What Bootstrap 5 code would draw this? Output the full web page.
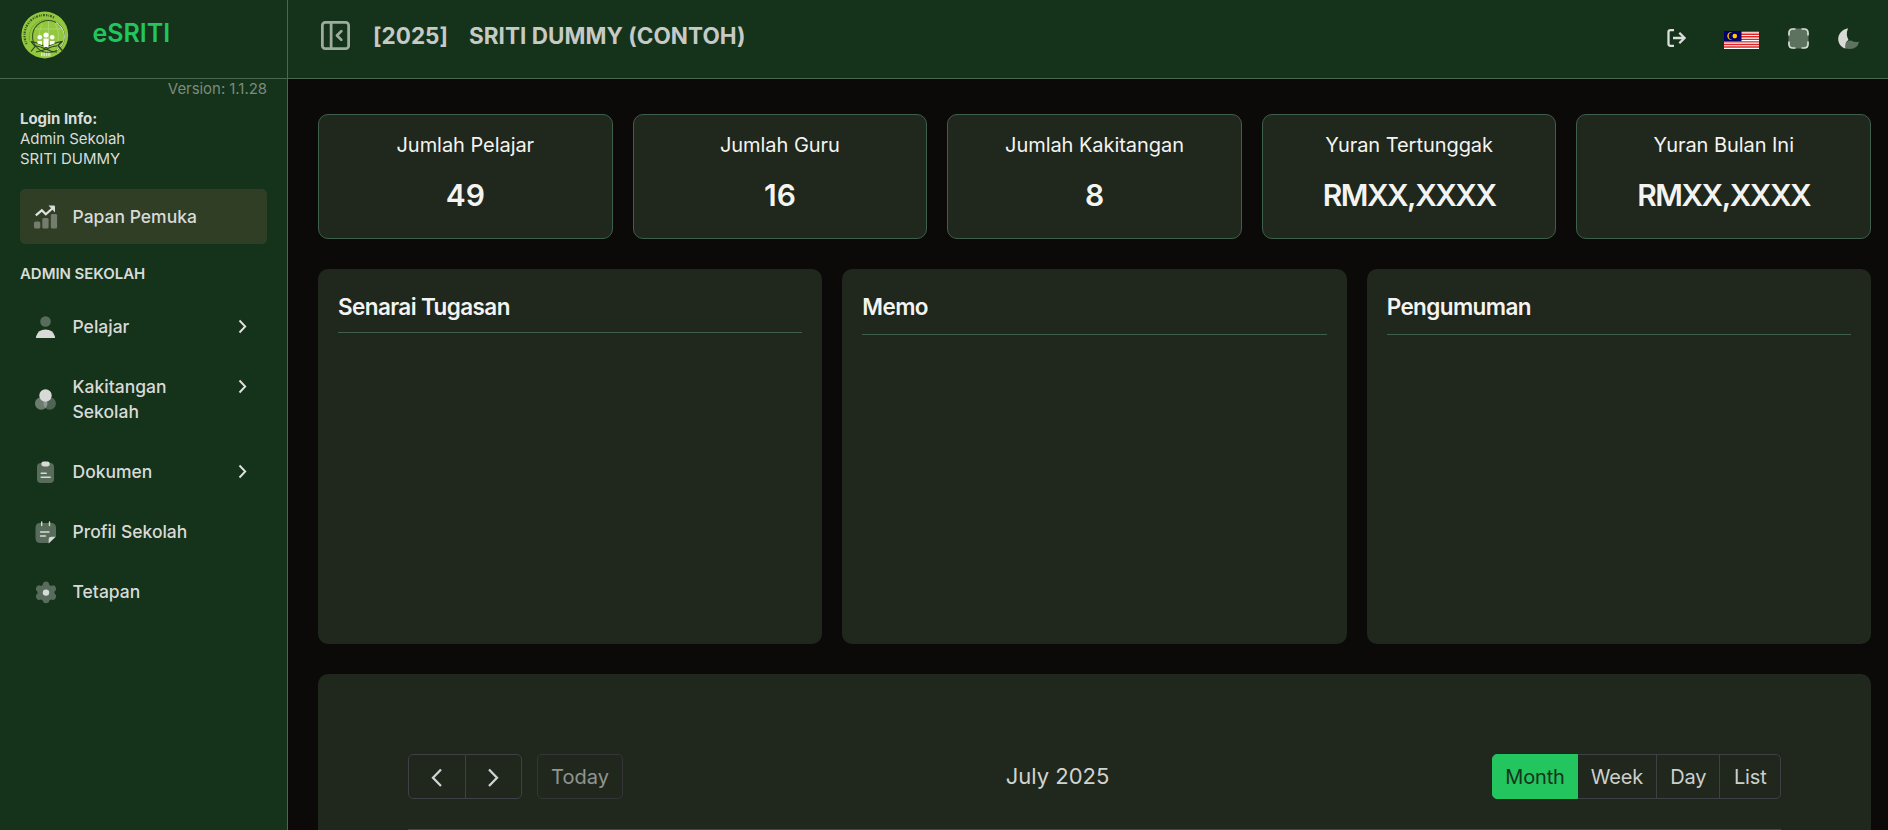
<!DOCTYPE html>
<html lang="ms" data-bs-theme="dark">
<head>
<meta charset="utf-8">
<meta name="viewport" content="width=device-width, initial-scale=1">
<title>eSRITI</title>
<link href="https://cdn.jsdelivr.net/npm/bootstrap@5.3.0/dist/css/bootstrap.min.css" rel="stylesheet">
<style>
:root{--green:#15321a;--line:#4a6550;--panel:#20271d;--edge:#3d5f4b;--fg:#d8dcd8}
body{font-family:Inter,"Liberation Sans",sans-serif;background:#0c0a09;color:var(--fg);height:100vh;overflow:hidden}
svg{display:block;flex:none}
.sidebar{width:288px;background:var(--green);border-right:1px solid var(--line);flex:none}
.brand-bar,.topbar{height:79px;border-bottom:1px solid var(--line);background:var(--green);flex:none}
.brand-bar{padding:11px 0 0 21px;gap:23.5px}
.brand-name{font-size:25px;line-height:30px;font-weight:600;color:#22c55e;margin-top:7px}
.version{font-size:15px;line-height:20px;padding-right:20px;color:#7a8b7c;letter-spacing:-.05px}
.login{font-size:15px;line-height:20px;padding:10px 20px 0;color:#dadcda;letter-spacing:-.03px}
.menu{margin:20px 20px 0;font-size:17.5px;font-weight:500;line-height:25px}
.menu-item{padding:15px 19px 15px 10px;border-radius:5px;min-height:55px;color:#d8dad8;text-decoration:none;display:flex;align-items:center;margin-bottom:5px}
.menu-item svg:first-child{margin:-2.5px 0}
.menu-item span{margin-left:12.5px;flex:1}
.menu-item .chev{align-self:flex-start;margin-top:2px}
.menu-item.on{background:#313e26}
.menu-head{font-size:15px;line-height:20px;font-weight:600;margin:20px 0 15px;letter-spacing:-.05px}
.topbar{padding:0 24px 0 30px}
.topbar-panel{margin-top:18px}
.title{font-size:22.5px;line-height:30px;font-weight:700;color:#c6cac6;margin:21px 0 0 20px;gap:21px;letter-spacing:.03px}
.tools{margin-top:23px}
.content{padding:35px 17px 0 30px}
.stats{gap:20px}
.stat{flex:1 1 0;background:var(--panel);border:1px solid var(--edge);border-radius:10px;height:125px;color:#f3f4f1;text-align:center;padding-top:15px}
.stat-label{font-size:20px;line-height:30px;letter-spacing:-.05px}
.stat-value{font-size:30px;line-height:40px;font-weight:600;margin-top:15px;letter-spacing:-1.5px}
.stat-value.count{letter-spacing:0}
.boxes{gap:20px;margin-top:30px}
.box{flex:1 1 0;background:var(--panel);border-radius:10px;height:375px;padding:20px}
.box h2{font-size:22.5px;line-height:35px;font-weight:600;letter-spacing:-.6px;color:#f3f4f1;margin:0;padding-bottom:10px;border-bottom:1px solid var(--edge)}
.box:first-child h2{padding-bottom:8px}
.calendar{background:var(--panel);border-radius:10px 10px 0 0;margin-top:30px;height:156px;padding:80px 90px 0}
.cal-bar{height:45px}
.cal-btn{height:45px;border:1px solid #3f3f46;font-size:20px;color:#ccd0cd;border-radius:5px;padding:0 12.5px;line-height:30px;display:flex;align-items:center;justify-content:center;background:none}
.step-btn{width:57.5px}
.today-btn{width:86px;opacity:.65}
.cal-group{display:flex}
.cal-group .cal-btn{border-radius:0}
.cal-group .cal-btn:first-child{border-radius:5px 0 0 5px}
.cal-group .cal-btn:last-child{border-radius:0 5px 5px 0}
.cal-group .cal-btn+.cal-btn{margin-left:-1px}
.views .cal-btn{letter-spacing:-.15px;width:64.5px;padding:0}
.views .cal-btn:nth-child(1){width:86px}
.views .cal-btn:nth-child(2){width:80px}
.views .cal-btn:nth-child(4){width:61.5px}
.cal-btn.on{background:#22c55e;border-color:#22c55e;color:#16321b;position:relative}
.cal-title{font-size:22px;color:#d0d4d0}
.cal-rule{border-top:1px solid #45454a;margin-top:30px}
</style>
</head>
<body class="d-flex">
<aside class="sidebar d-flex flex-column">
  <div class="brand-bar d-flex">
    <svg width="48" height="48" viewBox="0 0 48 48">
      <circle cx="23.8" cy="24" r="23.400" fill="#93c83e"/>
      <path d="M5.600 33A20 20 0 0 1 33 6.500" fill="none" stroke="#3a5c24" stroke-width="2.200" stroke-dasharray="1.300 1 .7 1 1.800 1.200"/>
      <path d="M9 31A17 17 0 0 1 39 16" fill="none" stroke="#6a9a34" stroke-width="1" stroke-dasharray="1.500 .7"/>
      <circle cx="27.500" cy="25.500" r="16" fill="#93c83e" stroke="#3a5524" stroke-width="1.100"/>
      <path d="M35 11.500A16 16 0 0 1 36 39" fill="none" stroke="#dcecc2" stroke-width="1"/>
      <path d="M27.500 10v20M14 18h27M21 12q-4 9-2 18M34 12q5 9 3 18" fill="none" stroke="#add873" stroke-width=".8"/>
      <path d="M10 30.500q7 1 15 6q8-5 16-6l-4 4 5 6M10 30.500l4 5-4 5M14 35q5 0 11 3.500q6-3.500 11-3.500M15 41q6-1 10-3q5 3 11 3" fill="none" stroke="#2c451f" stroke-width="1.200"/>
      <g fill="#fff"><circle cx="25" cy="24" r="2.600"/><circle cx="18.800" cy="26.300" r="2.300"/><circle cx="31.200" cy="26.300" r="2.300"/><path d="M16.500 30h4.500v4l-4.500-1.500zM22.500 27.500h5v8.500h-5zM29 30h4.500v2.500L29 34z"/></g>
      <path d="M20 43.500h10" fill="none" stroke="#d9e8c2" stroke-width="3.500" stroke-dasharray="1.600 .8"/>
    </svg>
    <div class="brand-name">eSRITI</div>
  </div>
  <div class="version text-end">Version: 1.1.28</div>
  <div class="login"><div class="fw-bold">Login Info:</div><div>Admin Sekolah</div><div>SRITI DUMMY</div></div>
  <nav class="menu">
    <a class="menu-item on">
      <svg width="30" height="30" viewBox="0 0 30 30" fill="#d8dad8"><g opacity=".4"><rect x="4" y="19.500" width="6.300" height="7" rx="1.500"/><rect x="12.300" y="16" width="6.300" height="10.500" rx="1.500"/><rect x="20.800" y="12" width="6.300" height="14.500" rx="1.500"/></g><path d="M5.800 13.300L11.800 8.300L15.800 12.300L22.300 6.500" fill="none" stroke="#e0e2e0" stroke-width="2.200"/><path d="M18.500 3.500h5.500q1 0 1 1v6z"/></svg>
      <span>Papan Pemuka</span></a>
    <div class="menu-head">ADMIN SEKOLAH</div>
    <a class="menu-item"><svg width="30" height="30" viewBox="0 0 30 30" fill="#d8dad8"><circle cx="15.500" cy="9.500" r="5.300" opacity=".35"/><path d="M6 26v-1.500Q8 17.500 15.500 17.500T25 24.500V26z"/></svg><span>Pelajar</span>
      <svg class="chev" width="12" height="20" viewBox="0 0 12 20" fill="none" stroke="#dfe2df" stroke-width="1.900"><path d="M3.500 4.500L9.200 10.500L3.500 16.500"/></svg></a>
    <a class="menu-item"><svg width="30" height="30" viewBox="0 0 30 30" fill="#d8dad8"><circle cx="11.200" cy="19.500" r="6.200" opacity=".45"/><circle cx="19.700" cy="19.500" r="6.200" opacity=".3"/><circle cx="15.500" cy="11.500" r="6.200"/></svg><span>Kakitangan<br>Sekolah</span>
      <svg class="chev" width="12" height="20" viewBox="0 0 12 20" fill="none" stroke="#dfe2df" stroke-width="1.900"><path d="M3.500 4.500L9.200 10.500L3.500 16.500"/></svg></a>
    <a class="menu-item"><svg width="30" height="30" viewBox="0 0 30 30" fill="#d8dad8"><rect x="7" y="6" width="17" height="20" rx="4" opacity=".35"/><rect x="11.300" y="4.500" width="8.500" height="5" rx="2.400"/><path d="M11.200 16.300h5M11.200 20.300h9" stroke="#d8dad8" stroke-width="1.500" stroke-linecap="round"/></svg><span>Dokumen</span>
      <svg class="chev" width="12" height="20" viewBox="0 0 12 20" fill="none" stroke="#dfe2df" stroke-width="1.900"><path d="M3.500 4.500L9.200 10.500L3.500 16.500"/></svg></a>
    <a class="menu-item"><svg width="30" height="30" viewBox="0 0 30 30" fill="#d8dad8"><path d="M10 6h11q5 0 5 5v8h-4q-3 0-3 3v4H10q-4.500 0-4.500-5V11q0-5 4.500-5z" opacity=".35"/><path d="M26 19.500L18.700 26.500V22.500q0-3 3-3z"/><path d="M11.700 5v3.500M19.500 5v3.500M10.500 15h8.500M10.500 19h5" stroke="#d8dad8" stroke-width="1.400" stroke-linecap="round"/></svg><span>Profil Sekolah</span></a>
    <a class="menu-item"><svg width="30" height="30" viewBox="0 0 30 30" fill="#d8dad8"><g opacity=".35"><path d="M13.200 6q2.800-2.800 5.600 0l.6 2q.8.500 1.500.9l2.200-.6q3.300.6 2.900 4.800l-1.500 1.700v1.700L26 18.200q.4 4.200-2.900 4.800l-2.200-.6q-.7.500-1.500.9l-.6 2q-2.800 2-5.600 0l-.6-2q-.8-.400-1.500-.9l-2.200.6q-3.300-.6-2.900-4.800l1.500-1.700v-1.700L6 13.100q-.4-4.200 2.900-4.800l2.200.6q.7-.400 1.500-.9z"/></g><circle cx="16" cy="15.600" r="3.200"/></svg><span>Tetapan</span></a>
  </nav>
</aside>
<main class="flex-grow-1 d-flex flex-column">
  <header class="topbar d-flex align-items-start">
    <svg class="topbar-panel" width="35" height="35" viewBox="0 0 24 24" fill="none" stroke="#9eab9f" stroke-width="1.900" stroke-linecap="round" stroke-linejoin="round"><rect x="3" y="3" width="18" height="18" rx="2"/><path d="M9 3v18M16 15l-3-3 3-3"/></svg>
    <div class="title d-flex"><span>[2025]</span><span>SRITI DUMMY (CONTOH)</span></div>
    <div class="tools d-flex ms-auto">
      <svg width="30" height="30" viewBox="0 0 30 30" fill="none" stroke="#dcdedc" stroke-width="2.300"><path d="M13 7.200H9.500q-2 0-2 2v11.600q0 2 2 2H13M12 15h11M18.300 9.700L23.600 15L18.300 20.300"/></svg>
      <svg class="flag" width="35" height="18" viewBox="0 0 35 18" style="margin:8px 0 0 33px"><path fill="#fff" d="M0 0h35v18H0z"/><path stroke="#dc2626" stroke-width="1.400" d="M0 .65h35M0 3.210h35M0 5.780h35M0 8.350h35M0 10.920h35M0 13.490h35M0 16.060h35"/><path fill="#010066" d="M0 0h17.500v10.300H0z"/><path fill="#fc0" d="M8.500 1.300a4 4 0 1 0 0 7.600a3.300 3.300 0 1 1 0-7.600z"/><circle cx="10.800" cy="5.100" r="2.300" fill="#fc0"/></svg>
      <svg width="30" height="30" viewBox="0 0 30 30" style="margin-left:25px"><rect x="4.500" y="5.500" width="20" height="20" rx="4" fill="#5d725f"/><path d="M5 12.500V10q0-4 4-4h2.500M17.500 6H20q4 0 4 4v2.500M24 18.500V21q0 4-4 4h-2.500M11.500 25H9q-4 0-4-4v-2.500" fill="none" stroke="#d8dad8" stroke-width="1.700"/></svg>
      <svg width="30" height="30" viewBox="0 0 30 30" style="margin-left:20px"><path d="M11.500 25.500C10.500 20 13.500 17 17 17.500Q22 20 25 18.500Q24 26 15.500 26z" fill="#5d725f"/><path d="M14 5.200C1 8 2 23 11.500 25.500Q10.500 19 14.500 17Q11.500 12 14 5.200z" fill="#d8dad8"/></svg>
    </div>
  </header>
  <div class="content">
    <div class="stats d-flex">
      <div class="stat"><div class="stat-label">Jumlah Pelajar</div><div class="stat-value count">49</div></div>
      <div class="stat"><div class="stat-label">Jumlah Guru</div><div class="stat-value count">16</div></div>
      <div class="stat"><div class="stat-label">Jumlah Kakitangan</div><div class="stat-value count">8</div></div>
      <div class="stat"><div class="stat-label">Yuran Tertunggak</div><div class="stat-value">RMXX,XXXX</div></div>
      <div class="stat"><div class="stat-label">Yuran Bulan Ini</div><div class="stat-value">RMXX,XXXX</div></div>
    </div>
    <div class="boxes d-flex">
      <section class="box"><h2>Senarai Tugasan</h2></section>
      <section class="box"><h2>Memo</h2></section>
      <section class="box"><h2>Pengumuman</h2></section>
    </div>
    <section class="calendar">
      <div class="cal-bar d-flex justify-content-between align-items-center">
        <div class="d-flex" style="gap:15px">
          <div class="cal-group">
            <button class="cal-btn step-btn"><svg width="14" height="20" viewBox="0 0 14 20" fill="none" stroke="#d0d3d6" stroke-width="2.300"><path d="M11 2.500L3 10.800L11 19"/></svg></button>
            <button class="cal-btn step-btn"><svg width="14" height="20" viewBox="0 0 14 20" fill="none" stroke="#d0d3d6" stroke-width="2.300"><path d="M3 2.500L11 10.800L3 19"/></svg></button>
          </div>
          <button class="cal-btn today-btn">Today</button>
        </div>
        <div class="cal-title">July 2025</div>
        <div class="cal-group views">
          <button class="cal-btn on">Month</button><button class="cal-btn">Week</button><button class="cal-btn">Day</button><button class="cal-btn">List</button>
        </div>
      </div>
      <div class="cal-rule"></div>
    </section>
  </div>
</main>
<script src="https://cdn.jsdelivr.net/npm/bootstrap@5.3.0/dist/js/bootstrap.bundle.min.js"></script>
</body>
</html>
